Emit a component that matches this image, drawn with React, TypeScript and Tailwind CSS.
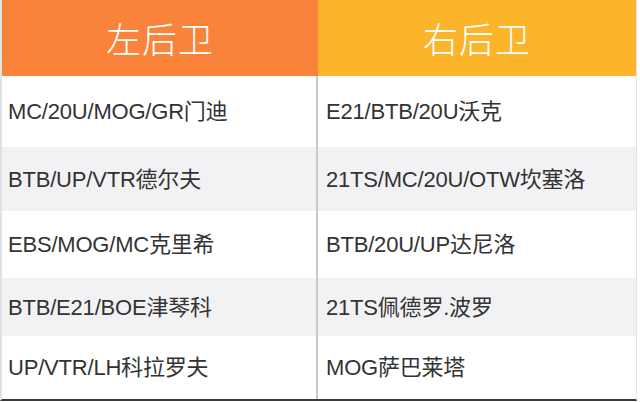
const rows: [string, string][] = [
  ['MC/20U/MOG/GR门迪', 'E21/BTB/20U沃克'],
  ['BTB/UP/VTR德尔夫', '21TS/MC/20U/OTW坎塞洛'],
  ['EBS/MOG/MC克里希', 'BTB/20U/UP达尼洛'],
  ['BTB/E21/BOE津琴科', '21TS佩德罗.波罗'],
  ['UP/VTR/LH科拉罗夫', 'MOG萨巴莱塔'],
]

const heights = ['h-[71px]', 'h-[64px]', 'h-[67px]', 'h-[58px]', 'h-[63px]']

export default function App() {
  return (
    <div
      className="w-[640px] h-[402px] bg-white overflow-hidden"
      style={{ fontFamily: '"Liberation Sans", Arial, "Noto Sans CJK SC", sans-serif' }}
    >
      <div className="w-[637px] border-l-2 border-r border-[#e2e2e4] border-b-2 border-b-[#3a3a3a]">
        <div className="flex h-[76px] text-white text-[35px] font-light" style={{ fontFamily: '"Noto Sans CJK SC", sans-serif' }}>
          <div className="w-[316px] flex items-center justify-center bg-[#f9833a] tracking-[1px]">左后卫</div>
          <div className="flex-1 flex items-center justify-center bg-[#fcb42b] tracking-[1px]">右后卫</div>
        </div>
        {rows.map(([l, r], i) => (
          <div
            key={i}
            className={`flex ${heights[i]} text-[22px] text-[#333] tracking-[-0.2px] ${i % 2 === 1 ? 'bg-[#f2f2f4]' : 'bg-white'}`}
          >
            <div className="w-[316px] flex items-center pl-[6px] border-r-2 border-[#c9c9cb]">{l}</div>
            <div className="flex-1 flex items-center pl-[8px]">{r}</div>
          </div>
        ))}
      </div>
    </div>
  )
}
